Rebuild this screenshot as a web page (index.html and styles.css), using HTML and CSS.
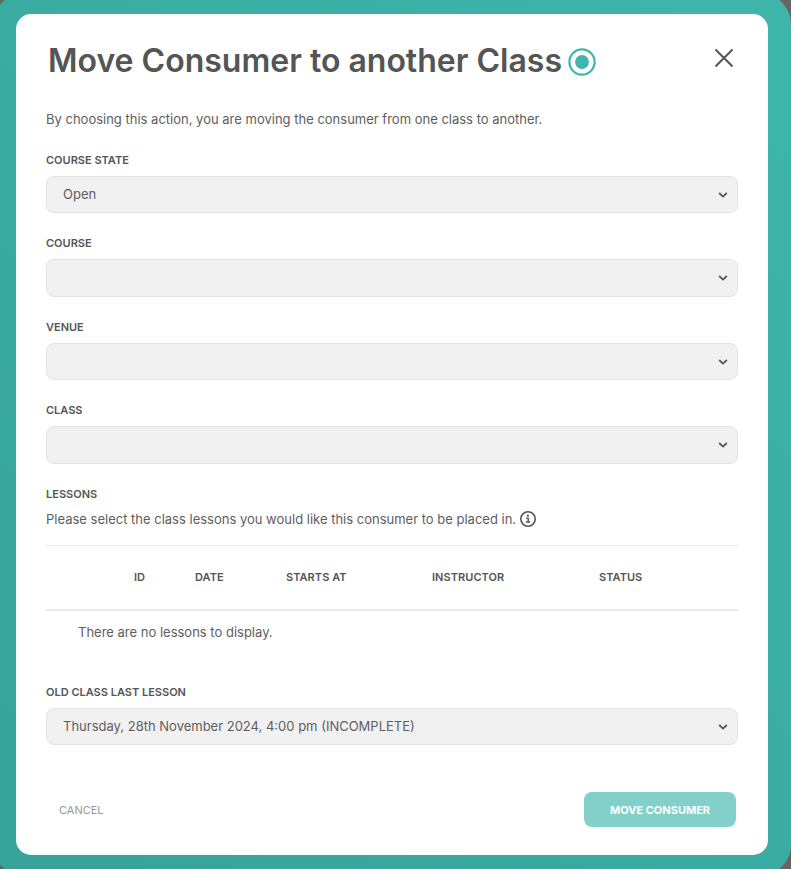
FILE: index.html
```html
<!DOCTYPE html>
<html lang="en">
<head>
    <meta charset="UTF-8">
    <meta name="viewport" content="width=device-width, initial-scale=1.0">
    <title>Move Consumer to another Class</title>
    <link rel="stylesheet" href="styles.css">
</head>
<body>
    <div class="modal-frame">
        <div class="modal">
            <div class="modal-header">
                <h1>Move Consumer to another Class</h1>
                <svg class="title-icon" viewBox="0 0 28 28">
                    <circle cx="14" cy="14" r="12.6" fill="none" stroke="currentColor" stroke-width="2.2"/>
                    <circle cx="14" cy="14" r="6.9" fill="currentColor"/>
                </svg>
                <button type="button" class="close" aria-label="Close">
                    <svg viewBox="0 0 20 20">
                        <path d="M1.5 1.5l17 17M18.5 1.5l-17 17" stroke="currentColor" stroke-width="2"/>
                    </svg>
                </button>
            </div>

            <p class="intro">By choosing this action, you are moving the consumer from one class to another.</p>

            <form id="moveForm">
                <div class="field">
                    <label for="courseState">Course State</label>
                    <div class="select">
                        <select id="courseState"><option>Open</option></select>
                        <svg class="chevron" viewBox="0 0 10 6"><path d="M1.2 1l3.8 3.6L8.8 1"/></svg>
                    </div>
                </div>
                <div class="field">
                    <label for="course">Course</label>
                    <div class="select">
                        <select id="course"><option></option></select>
                        <svg class="chevron" viewBox="0 0 10 6"><path d="M1.2 1l3.8 3.6L8.8 1"/></svg>
                    </div>
                </div>
                <div class="field">
                    <label for="venue">Venue</label>
                    <div class="select">
                        <select id="venue"><option></option></select>
                        <svg class="chevron" viewBox="0 0 10 6"><path d="M1.2 1l3.8 3.6L8.8 1"/></svg>
                    </div>
                </div>
                <div class="field">
                    <label for="class">Class</label>
                    <div class="select">
                        <select id="class"><option></option></select>
                        <svg class="chevron" viewBox="0 0 10 6"><path d="M1.2 1l3.8 3.6L8.8 1"/></svg>
                    </div>
                </div>

                <div class="lessons">
                    <h2>Lessons</h2>
                    <p class="lessons-help">
                        <span>Please select the class lessons you would like this consumer to be placed in.</span>
                        <svg class="info-icon" viewBox="0 0 16 16">
                            <circle cx="8" cy="8" r="7.2" fill="none" stroke="currentColor" stroke-width="1.6"/>
                            <path d="M6.3 7.3h1.9v3.6M6 11h4" fill="none" stroke="currentColor" stroke-width="1.4"/>
                            <circle cx="7.9" cy="4.7" r="1.1" fill="currentColor"/>
                        </svg>
                    </p>
                    <table>
                        <colgroup>
                            <col class="col-check">
                            <col class="col-id">
                            <col class="col-date">
                            <col class="col-starts">
                            <col class="col-instructor">
                            <col>
                        </colgroup>
                        <thead>
                            <tr>
                                <th></th>
                                <th>ID</th>
                                <th>Date</th>
                                <th>Starts At</th>
                                <th>Instructor</th>
                                <th>Status</th>
                            </tr>
                        </thead>
                        <tbody>
                            <tr>
                                <td colspan="6">There are no lessons to display.</td>
                            </tr>
                        </tbody>
                    </table>
                </div>

                <div class="field">
                    <label for="lastLesson">Old Class Last Lesson</label>
                    <div class="select">
                        <select id="lastLesson"><option>Thursday, 28th November 2024, 4:00 pm (INCOMPLETE)</option></select>
                        <svg class="chevron" viewBox="0 0 10 6"><path d="M1.2 1l3.8 3.6L8.8 1"/></svg>
                    </div>
                </div>

                <div class="actions">
                    <button type="button" class="btn-cancel">Cancel</button>
                    <button type="submit" class="btn-move" disabled>Move Consumer</button>
                </div>
            </form>
        </div>
    </div>
</body>
</html>
```

FILE: styles.css
```css
:root {
    --primary-color: #3eb6ac;
    --primary-dark: #37a297;
    --text-color: #555555;
    --text-light: #5e5e5e;
    --field-background: #f1f1f1;
    --border-color: #e3e3e3;
}

* {
    box-sizing: border-box;
}

body {
    font-family: Inter, sans-serif;
    margin: 0;
    height: 869px;
    overflow: hidden;
    background-color: #656565;
    color: var(--text-color);
    font-size: 13px;
}

.modal-frame {
    height: 881px;
    margin: -6px 0 0 -7px;
    padding: 20px 23px;
    border-radius: 30px;
    background: linear-gradient(to top right, var(--primary-dark), var(--primary-color));
}

.modal {
    height: 841px;
    padding: 27px 30px 28px;
    border-radius: 15px;
    background: #fff;
}

.modal-header {
    display: flex;
    align-items: center;
    height: 40px;
    padding-left: 2px;
}

h1 {
    margin: 0;
    font-size: 32px;
    font-weight: 600;
    line-height: 40px;
    white-space: nowrap;
}

.title-icon {
    width: 28px;
    height: 28px;
    margin: 2px 0 0 6px;
    color: var(--primary-color);
}

.close {
    width: 20px;
    height: 20px;
    margin: 0 4px 6px auto;
    padding: 0;
    border: none;
    background: none;
    color: var(--text-color);
    cursor: pointer;
}

.close svg {
    display: block;
}

.intro {
    margin: 28px 0 0;
    color: var(--text-light);
    line-height: 20px;
}

#moveForm {
    padding-top: 22.6px;
}

.field {
    height: 83.5px;
}

label,
h2 {
    display: block;
    margin: 0;
    font-size: 11px;
    font-weight: 600;
    line-height: 16px;
    text-transform: uppercase;
}

.select {
    position: relative;
    margin-top: 8px;
}

select {
    display: block;
    appearance: none;
    width: 100%;
    height: 37.5px;
    padding: 0 30px 0 16px;
    border: 1px solid var(--border-color);
    border-radius: 8px;
    background-color: var(--field-background);
    color: var(--text-light);
    font-family: inherit;
    font-size: 13px;
}

.chevron {
    position: absolute;
    right: 10px;
    top: 16px;
    width: 10px;
    height: 6px;
    fill: none;
    stroke: #555;
    stroke-width: 1.8;
    pointer-events: none;
}

.lessons {
    height: 198.4px;
}

.lessons-help {
    display: flex;
    align-items: center;
    gap: 4px;
    height: 20px;
    margin: 7px 0 16px;
    color: var(--text-light);
}

.info-icon {
    width: 16px;
    height: 16px;
    color: var(--text-color);
}

table {
    width: 100%;
    table-layout: fixed;
    border-collapse: separate;
    border-spacing: 0;
    border-top: 1px solid #ebebeb;
}

.col-check { width: 88px; }
.col-id { width: 61px; }
.col-date { width: 91px; }
.col-starts { width: 146px; }
.col-instructor { width: 167px; }

th {
    height: 65px;
    padding: 0;
    border-bottom: 2px solid #ebebeb;
    font-size: 11px;
    font-weight: 600;
    letter-spacing: 0.05px;
    text-align: left;
    text-transform: uppercase;
}

td {
    height: 43px;
    padding: 0 32px;
    color: var(--text-light);
}

#lastLesson {
    padding-bottom: 1px;
}

.actions {
    display: flex;
    justify-content: space-between;
    align-items: center;
    margin-top: 24.5px;
    padding: 0 2px 0 13px;
}

.actions button {
    border: none;
    font-family: inherit;
    font-size: 11px;
    text-transform: uppercase;
}

.btn-cancel {
    padding: 2px 0 0;
    background: none;
    color: #999;
}

.btn-move {
    width: 152px;
    height: 35px;
    padding: 1px 0 0;
    border-radius: 8px;
    background-color: #82d0c9;
    color: #fff;
    font-weight: 700;
}
```
